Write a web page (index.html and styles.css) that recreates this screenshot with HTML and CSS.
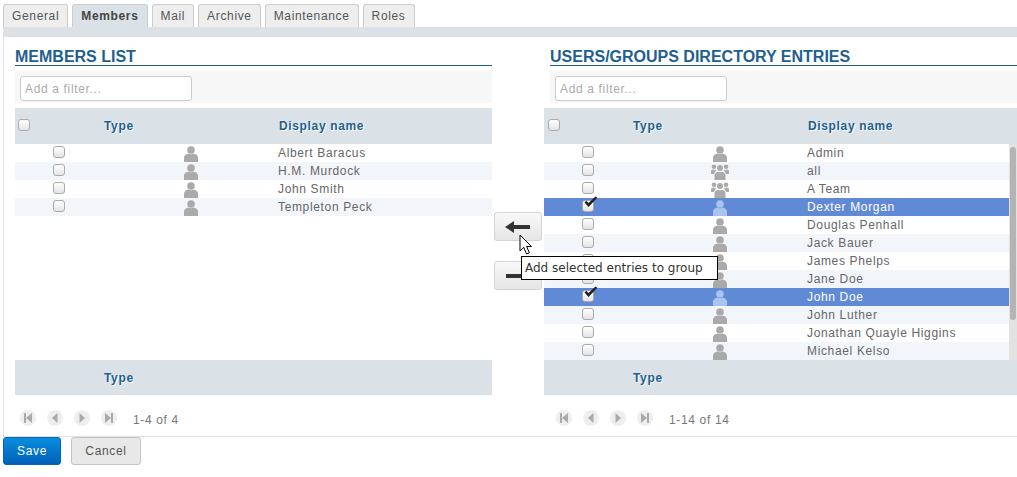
FILE: index.html
```html
<!DOCTYPE html>
<html lang="en">
<head>
    <meta charset="UTF-8">
    <title>Members</title>
    <link rel="stylesheet" href="styles.css">
</head>
<body>
    <svg class="defs" width="0" height="0">
        <symbol id="user" viewBox="0 0 14 16">
            <circle cx="7" cy="4" r="3.8"/>
            <path d="M0 16V11.5C0 9.2 2.4 8 4.5 7.6 5.5 8.4 8.500 8.400 9.500 7.600 11.600 8 14 9.200 14 11.500V16Z"/>
        </symbol>
        <symbol id="group" viewBox="0 0 18 16">
            <circle cx="3" cy="2.800" r="2.300"/>
            <circle cx="15" cy="2.800" r="2.300"/>
            <circle cx="9" cy="4" r="3"/>
            <path d="M0 10V7C0 6 1 5.500 2 5.400 3 6 4 6 4.800 5.600 5 7 4.500 8 3 9.500V10Z"/>
            <path d="M18 10V7C18 6 17 5.500 16 5.400 15 6 14 6 13.200 5.600 13 7 13.500 8 15 9.500V10Z"/>
            <path d="M3.500 16V11.500C3.500 9.500 5 8.300 6.800 7.800 7.800 8.400 10.200 8.400 11.200 7.800 13 8.300 14.500 9.500 14.500 11.500V16Z"/>
        </symbol>
        <symbol id="tick" viewBox="0 0 14 12">
            <path d="M1 6.500 2.800 4.800 5 7 12 0.500 13.800 1.800 5 11Z"/>
        </symbol>
    </svg>

    <ul class="tabs">
        <li class="tab">General</li>
        <li class="tab tab-active">Members</li>
        <li class="tab">Mail</li>
        <li class="tab">Archive</li>
        <li class="tab">Maintenance</li>
        <li class="tab">Roles</li>
    </ul>

    <div class="panel">
        <div class="strip"></div>
        <div class="columns">
            <section class="side side-left">
                <h2 class="title">Members list</h2>
                <div class="filter"><input class="filter-input" type="text" placeholder="Add a filter..."></div>
                <div class="table-head row-grid">
                    <div class="head-check"><span class="check"></span></div>
                    <div>Type</div>
                    <div>Display name</div>
                </div>
                <div class="table-body">
                    <div class="rows">
                        <div class="row row-grid"><div class="cell-c"><span class="check"></span></div><div class="cell-c"><svg class="icon"><use href="#user"/></svg></div><div class="name">Albert Baracus</div></div>
                        <div class="row row-grid"><div class="cell-c"><span class="check"></span></div><div class="cell-c"><svg class="icon"><use href="#user"/></svg></div><div class="name">H.M. Murdock</div></div>
                        <div class="row row-grid"><div class="cell-c"><span class="check"></span></div><div class="cell-c"><svg class="icon"><use href="#user"/></svg></div><div class="name">John Smith</div></div>
                        <div class="row row-grid"><div class="cell-c"><span class="check"></span></div><div class="cell-c"><svg class="icon"><use href="#user"/></svg></div><div class="name">Templeton Peck</div></div>
                    </div>
                </div>
                <div class="table-foot row-grid"><div></div><div>Type</div></div>
                <div class="pager">
                    <span class="page-btn"><svg viewBox="0 0 8 10"><path d="M0 0H2V10H0ZM8 0V10L2 5Z"/></svg></span>
                    <span class="page-btn"><svg viewBox="0 0 8 10"><path d="M6.500 0V10L1 5Z"/></svg></span>
                    <span class="page-btn"><svg viewBox="0 0 8 10"><path d="M1.500 0V10L7 5Z"/></svg></span>
                    <span class="page-btn"><svg viewBox="0 0 8 10"><path d="M8 0H6V10H8ZM0 0V10L6 5Z"/></svg></span>
                    <span class="page-text">1-4 of 4</span>
                </div>
            </section>

            <div class="move-btns">
                <button class="move-btn" type="button"><svg viewBox="0 0 26 12"><path d="M0 6 9 0V4H25V8H9V12Z"/></svg></button>
                <button class="move-btn" type="button"><svg viewBox="0 0 26 12"><path d="M1 4H26V8H1Z"/></svg></button>
            </div>

            <section class="side side-right">
                <h2 class="title">Users/groups directory entries</h2>
                <div class="filter"><input class="filter-input" type="text" placeholder="Add a filter..."></div>
                <div class="table-head row-grid">
                    <div class="head-check"><span class="check"></span></div>
                    <div>Type</div>
                    <div>Display name</div>
                </div>
                <div class="table-body">
                    <div class="rows">
                        <div class="row row-grid"><div class="cell-c"><span class="check"></span></div><div class="cell-c"><svg class="icon"><use href="#user"/></svg></div><div class="name">Admin</div></div>
                        <div class="row row-grid"><div class="cell-c"><span class="check"></span></div><div class="cell-c"><svg class="icon icon-group"><use href="#group"/></svg></div><div class="name">all</div></div>
                        <div class="row row-grid"><div class="cell-c"><span class="check"></span></div><div class="cell-c"><svg class="icon icon-group"><use href="#group"/></svg></div><div class="name">A Team</div></div>
                        <div class="row row-grid row-selected"><div class="cell-c"><span class="check"><svg class="tick"><use href="#tick"/></svg></span></div><div class="cell-c"><svg class="icon"><use href="#user"/></svg></div><div class="name">Dexter Morgan</div></div>
                        <div class="row row-grid"><div class="cell-c"><span class="check"></span></div><div class="cell-c"><svg class="icon"><use href="#user"/></svg></div><div class="name">Douglas Penhall</div></div>
                        <div class="row row-grid"><div class="cell-c"><span class="check"></span></div><div class="cell-c"><svg class="icon"><use href="#user"/></svg></div><div class="name">Jack Bauer</div></div>
                        <div class="row row-grid"><div class="cell-c"><span class="check"></span></div><div class="cell-c"><svg class="icon"><use href="#user"/></svg></div><div class="name">James Phelps</div></div>
                        <div class="row row-grid"><div class="cell-c"><span class="check"></span></div><div class="cell-c"><svg class="icon"><use href="#user"/></svg></div><div class="name">Jane Doe</div></div>
                        <div class="row row-grid row-selected"><div class="cell-c"><span class="check"><svg class="tick"><use href="#tick"/></svg></span></div><div class="cell-c"><svg class="icon"><use href="#user"/></svg></div><div class="name">John Doe</div></div>
                        <div class="row row-grid"><div class="cell-c"><span class="check"></span></div><div class="cell-c"><svg class="icon"><use href="#user"/></svg></div><div class="name">John Luther</div></div>
                        <div class="row row-grid"><div class="cell-c"><span class="check"></span></div><div class="cell-c"><svg class="icon"><use href="#user"/></svg></div><div class="name">Jonathan Quayle Higgins</div></div>
                        <div class="row row-grid"><div class="cell-c"><span class="check"></span></div><div class="cell-c"><svg class="icon"><use href="#user"/></svg></div><div class="name">Michael Kelso</div></div>
                    </div>
                    <div class="scroll-track"><div class="scroll-thumb"></div></div>
                </div>
                <div class="table-foot row-grid"><div></div><div>Type</div></div>
                <div class="pager">
                    <span class="page-btn"><svg viewBox="0 0 8 10"><path d="M0 0H2V10H0ZM8 0V10L2 5Z"/></svg></span>
                    <span class="page-btn"><svg viewBox="0 0 8 10"><path d="M6.500 0V10L1 5Z"/></svg></span>
                    <span class="page-btn"><svg viewBox="0 0 8 10"><path d="M1.500 0V10L7 5Z"/></svg></span>
                    <span class="page-btn"><svg viewBox="0 0 8 10"><path d="M8 0H6V10H8ZM0 0V10L6 5Z"/></svg></span>
                    <span class="page-text">1-14 of 14</span>
                </div>
            </section>
        </div>
    </div>

    <div class="actions">
        <button class="btn btn-save" type="button">Save</button>
        <button class="btn btn-cancel" type="button">Cancel</button>
    </div>

    <svg class="cursor" viewBox="0 0 14 21"><path d="M1 1V17L4.800 13.400 7.600 20 10.400 18.800 7.600 12.500H12.500Z"/></svg>
    <div class="tooltip">Add selected entries to group</div>
</body>
</html>
```

FILE: styles.css
```css
* {
    box-sizing: border-box;
}
body {
    margin: 0;
    width: 1017px;
    height: 477px;
    overflow: hidden;
    position: relative;
    background-color: #fff;
    font-family: "Liberation Sans", Arial, sans-serif;
    font-size: 12px;
    letter-spacing: 0.65px;
    color: #666;
}
.defs {
    position: absolute;
}
.tabs {
    display: flex;
    gap: 4px;
    list-style: none;
    margin: 0;
    padding: 4px 0 0 3px;
    height: 27px;
}
.tab {
    padding: 0 8px;
    line-height: 22px;
    color: #555;
    background-color: #eee;
    border: 1px solid #ccc;
    border-bottom: none;
    border-radius: 3px 3px 0 0;
}
.tab-active {
    font-weight: bold;
    color: #444;
    background-color: #dae2e8;
}
.panel {
    margin-left: 3px;
    height: 410px;
    border-left: 1px solid #dde3e8;
    border-bottom: 1px solid #dde3e8;
}
.strip {
    height: 10px;
    background-color: #dae2e8;
}
.columns {
    display: flex;
    padding-left: 11px;
}
.side-left {
    width: 477px;
}
.side-right {
    width: 473px;
}
.title {
    margin: 0;
    padding-top: 11px;
    height: 29px;
    font-size: 16px;
    line-height: 17px;
    letter-spacing: 0;
    text-transform: uppercase;
    color: #1f5f8f;
    border-bottom: 1px solid #1f5f8f;
}
.filter {
    height: 32px;
    margin-top: 5px;
    padding: 5px;
    background-color: #f7f7f7;
}
.filter-input {
    display: block;
    width: 172px;
    height: 25px;
    padding: 0 4px;
    font-family: inherit;
    font-size: 12px;
    letter-spacing: 0.65px;
    background-color: #fff;
    border: 1px solid #ccc;
    border-radius: 3px;
}
.filter-input::placeholder {
    color: #aaa;
}
.side-right .title,
.side-right .filter {
    margin-left: 6px;
}
.side-right .table-head {
    margin-top: 5px;
}
.row-grid {
    display: grid;
    grid-template-columns: 88px 175px 1fr;
    align-items: center;
}
.table-head {
    height: 36px;
    margin-top: 5px;
    font-weight: bold;
    color: #1f5f8f;
    background-color: #dae2e8;
    text-shadow: 1px 1px 0 #fff;
}
.table-head > div:nth-child(2),
.table-foot > div:nth-child(2) {
    padding-left: 1px;
}
.table-head > div:nth-child(3) {
    padding-left: 1px;
}
.head-check {
    display: flex;
    padding: 0 0 4px 3px;
}
.side-right .head-check {
    padding-left: 4px;
}
.table-body {
    display: flex;
    height: 216px;
}
.rows {
    flex: 1;
}
.row {
    height: 18px;
}
.row:nth-child(even) {
    background-color: #f2f6fb;
}
.row-selected,
.row-selected:nth-child(even) {
    background-color: #618ad6;
    color: #fff;
}
.cell-c {
    display: flex;
    justify-content: center;
    height: 18px;
    align-items: flex-start;
}
.name {
    white-space: nowrap;
}
.check {
    position: relative;
    display: block;
    width: 12px;
    height: 12px;
    margin-top: 2px;
    background-image: linear-gradient(#fff, #e4e4e4);
    border: 1px solid #aaa;
    border-radius: 3px;
}
.tick {
    position: absolute;
    left: 0;
    top: -5px;
    width: 15px;
    height: 12px;
    fill: #222;
}
.icon {
    width: 14px;
    height: 16px;
    margin-top: 2px;
    fill: #aaa;
}
.icon-group {
    width: 18px;
    height: 16px;
}
.row-selected .icon {
    fill: #a9c4ee;
}
.scroll-track {
    width: 8px;
    padding: 3px 1px 0;
    background-color: #e2e2e2;
}
.scroll-thumb {
    height: 173px;
    background-color: #b4b4b4;
    border-radius: 3px;
}
.table-foot {
    height: 35px;
    font-weight: bold;
    color: #1f5f8f;
    background-color: #dae2e8;
    text-shadow: 1px 1px 0 #fff;
}
.pager {
    display: flex;
    align-items: center;
    gap: 11px;
    height: 41px;
    padding: 5px 0 0 5px;
}
.page-btn {
    display: flex;
    align-items: center;
    justify-content: center;
    width: 16px;
    height: 16px;
    background-color: #eee;
    border-radius: 50%;
}
.page-btn svg {
    width: 8px;
    height: 10px;
    fill: #aaa;
}
.side-right .pager {
    padding-left: 12px;
}
.page-text {
    margin: 3px 0 0 5px;
    color: #777;
}
.move-btns {
    width: 52px;
    display: flex;
    flex-direction: column;
    align-items: center;
    gap: 20px;
    padding-top: 175px;
}
.move-btn {
    display: flex;
    align-items: center;
    justify-content: center;
    width: 48px;
    height: 29px;
    padding: 0;
    background-image: linear-gradient(#f8f8f8, #e6e6e6);
    border: 1px solid #d4d4d4;
    border-radius: 3px;
}
.move-btn svg {
    width: 26px;
    height: 12px;
    fill: #333;
}
.actions {
    display: flex;
    gap: 10px;
    padding-left: 3px;
}
.btn {
    height: 28px;
    font-family: inherit;
    font-size: 12px;
    letter-spacing: 0.65px;
    border-radius: 3px;
}
.btn-save {
    width: 58px;
    color: #fff;
    background-image: linear-gradient(#0a8ee0, #0060b8);
    border: 1px solid #0668bd;
}
.btn-cancel {
    width: 70px;
    color: #555;
    background-color: #e8e8e8;
    border: 1px solid #c4c4c4;
}
/* pointer and tooltip sit on top of the table */
.cursor {
    position: absolute;
    left: 519px;
    top: 234px;
    width: 14px;
    height: 21px;
    fill: #fff;
    stroke: #000;
    stroke-width: 1;
}
.tooltip {
    position: absolute;
    left: 521px;
    top: 256px;
    width: 197px;
    height: 24px;
    padding-left: 3px;
    line-height: 23px;
    font-family: "DejaVu Sans", sans-serif;
    letter-spacing: 0;
    color: #333;
    white-space: nowrap;
    background-color: #fff;
    border: 1px solid #000;
}
```
